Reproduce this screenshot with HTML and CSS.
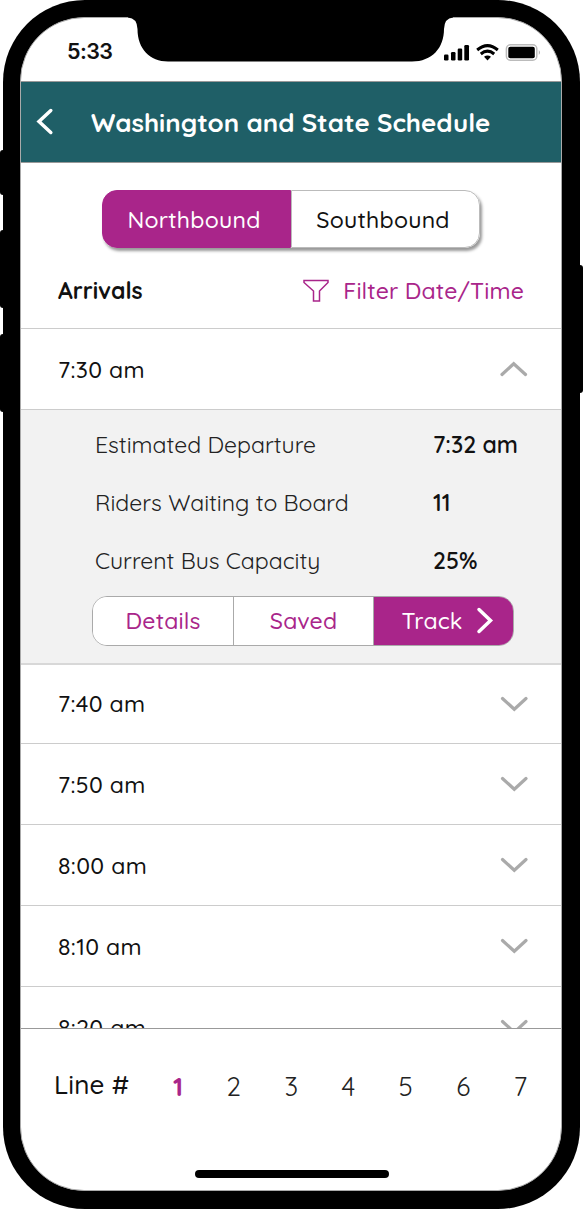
FILE: index.html
```html
<!DOCTYPE html>
<html lang="en">
<head>
<meta charset="utf-8">
<title>Washington and State Schedule</title>
<link rel="stylesheet" href="styles.css">
</head>
<body>
<svg class="symbols" aria-hidden="true">
  <symbol id="down" viewBox="0 0 28 18"><path d="M2.500 3.500 14.300 14.300 26 3.500" fill="none" stroke="#aaa" stroke-width="3.200" stroke-linecap="round"/></symbol>
</svg>
<div class="phone">
  <i class="side-key mute"></i><i class="side-key volume-up"></i><i class="side-key volume-down"></i><i class="side-key power"></i>
  <svg class="notch" viewBox="0 0 325 46"><path d="M0 0H325V1.500Q316.500 2 316 13C316 32 304 45.500 284 45.500H40C22 45.500 9.500 33 9.500 13Q9 2 0 1.500Z"/></svg>
  <main class="screen">
    <div class="status">
      <span class="clock">5:33</span>
      <svg class="signals" width="98" height="20" viewBox="0 0 98 20">
        <rect x="1" y="11.500" width="4.500" height="6" rx="1.200"/><rect x="8" y="9" width="4.500" height="8.500" rx="1.200"/><rect x="14.700" y="5.500" width="4.500" height="12" rx="1.200"/><rect x="21.300" y="2" width="4.700" height="15.500" rx="1.200"/>
        <g fill="none" stroke="#000" stroke-width="3"><path d="M34.200 7Q44.500 -1.700 54.800 7"/><path d="M37.800 11Q44.500 5.300 51.200 11"/></g>
        <path d="M41 13.700Q44.500 11.100 48 13.700L44.500 17.500Z"/>
        <rect x="63.400" y="1.800" width="30.400" height="15.400" rx="4" fill="none" stroke="#bbb" stroke-width="1.500"/><rect x="65.300" y="3.700" width="26.500" height="11.600" rx="2"/><path d="M95.800 7Q98 9.500 95.800 12Z" fill="#aaa"/>
      </svg>
    </div>
    <header class="topbar">
      <svg width="18" height="28" viewBox="0 0 18 28"><path d="M14.800 2.500 3 13.500 14.800 24.500" fill="none" stroke="#fff" stroke-width="3.500" stroke-linecap="round"/></svg>
      <h1>Washington and State Schedule</h1>
    </header>
    <nav class="direction"><button class="active">Northbound</button><button>Southbound</button></nav>
    <div class="arrivals">
      <h2>Arrivals</h2>
      <a class="filter"><svg width="26" height="24" viewBox="0 0 26 24"><path d="M1 1.600H25V3.500L16.500 12V22H10.500V12L1 3.500Z" fill="none" stroke="#a9258a" stroke-width="1.500"/></svg><span>Filter Date/Time</span></a>
    </div>
    <section class="schedule">
      <div class="row first"><span>7:30 am</span><svg class="up" width="28" height="18"><use href="#down"/></svg></div>
      <div class="panel">
        <dl>
          <dt>Estimated Departure</dt><dd>7:32 am</dd>
          <dt>Riders Waiting to Board</dt><dd>11</dd>
          <dt>Current Bus Capacity</dt><dd>25%</dd>
        </dl>
        <div class="actions"><button>Details</button><button>Saved</button><button class="active">Track <svg width="18" height="28" viewBox="0 0 18 28"><path d="M3 2.500 14.500 13.500 3 24.500" fill="none" stroke="#fff" stroke-width="3.500" stroke-linecap="round"/></svg></button></div>
      </div>
      <div class="row short"><span>7:40 am</span><svg width="28" height="18"><use href="#down"/></svg></div>
      <div class="row"><span>7:50 am</span><svg width="28" height="18"><use href="#down"/></svg></div>
      <div class="row"><span>8:00 am</span><svg width="28" height="18"><use href="#down"/></svg></div>
      <div class="row"><span>8:10 am</span><svg width="28" height="18"><use href="#down"/></svg></div>
      <div class="row"><span>8:20 am</span><svg width="28" height="18"><use href="#down"/></svg></div>
    </section>
    <footer class="lines">
      <div class="picker"><strong>Line #</strong><div class="numbers"><b>1</b><span>2</span><span>3</span><span>4</span><span>5</span><span>6</span><span>7</span></div></div>
      <div class="home"></div>
    </footer>
  </main>
</div>
</body>
</html>
```
FILE: styles.css
```css
* { box-sizing: border-box; }
body { margin: 0; background: #fff; color: #111; font: 500 23px/28px Quicksand, Lato, "Open Sans", sans-serif; }
h1, h2, dl, dd { margin: 0; }
svg { display: block; flex: none; }
button { font: inherit; letter-spacing: inherit; padding: 0; border: 0; background: #fff; color: inherit; }
.symbols { position: absolute; width: 0; height: 0; }
.phone { position: relative; width: 577px; height: 1209px; margin-left: 3px; padding: 17px 18px 18px 17px; background: #000; border-radius: 82px; }
.side-key { position: absolute; left: -3px; width: 6px; background: #000; border-radius: 3px 0 0 3px; }
.mute { top: 150px; height: 45px; }
.volume-up { top: 230px; height: 78px; }
.volume-down { top: 334px; height: 78px; }
.power { left: auto; right: -3px; top: 265px; height: 128px; border-radius: 0 3px 3px 0; }
.notch { position: absolute; z-index: 1; left: 125px; top: 16px; width: 325px; height: 46px; }
.screen { display: flex; flex-direction: column; height: 1174px; background: #fff; border: 1px solid #aaa; border-radius: 64px; overflow: hidden; }
.status { flex: 0 0 63px; display: flex; justify-content: space-between; padding: 19px 20px 0 46px; }
.clock { font: 600 21.500px/28px Inter, sans-serif; letter-spacing: -.6px; }
.signals { margin-top: 6px; }
.topbar { flex: 0 0 82px; display: flex; align-items: center; background: #1f5f67; color: #fff; padding: 0 0 1px 15px; border: 1px solid #999; border-width: 1px 0; }
h1 { margin-left: 37px; padding-top: 1px; font-size: 25.900px; font-weight: 700; white-space: nowrap; }
.direction { flex: none; display: flex; align-self: center; width: 378px; height: 58px; margin: 27px 1px 0 0; border-radius: 15px; box-shadow: 2px 3px 3px #999; letter-spacing: .250px; }
.direction button { flex: 1; padding: 1px 4px 0 0; border: 1px solid #bbb; border-radius: 0 15px 15px 0; }
.direction .active { border-color: #a9258a; border-radius: 15px 0 0 15px; }
button.active { background: #a9258a; color: #fff; }
.arrivals { flex: 0 0 80px; display: flex; justify-content: space-between; align-items: center; padding: 5px 37px 0 37px; }
h2 { font-size: 23px; font-weight: 700; }
.filter { display: flex; align-items: center; gap: 14px; color: #a9258a; letter-spacing: .150px; }
.schedule { flex: 1; min-height: 0; overflow: hidden; border-top: 1px solid #ccc; }
.row { display: flex; justify-content: space-between; align-items: center; height: 81px; padding: 0 33px 0 37px; border-bottom: 1px solid #ccc; letter-spacing: .350px; }
.row span { padding-top: 2px; }
.short { height: 79px; }
.short span { padding-top: 0; }
.up { transform: rotate(180deg); }
.panel { height: 255px; padding: 6px 47px 0 71px; background: #f2f2f2; border-bottom: 2px solid #d8d8d8; }
dl { display: grid; grid-template-columns: 338px 1fr; grid-auto-rows: 58px; align-items: center; padding-left: 3px; }
dt { font-weight: 400; color: #222; }
dd { font-weight: 600; white-space: nowrap; }
.actions { display: grid; grid-template-columns: repeat(3, 1fr); height: 50px; margin-top: 6px; border: 1px solid #aaa; border-radius: 15px; overflow: hidden; color: #a9258a; letter-spacing: .150px; }
.actions button + button { border-left: 1px solid #aaa; }
.actions .active { display: flex; align-items: center; justify-content: center; gap: 13px; padding-left: 8px; }
.lines { flex: 0 0 162px; display: flex; flex-direction: column; align-items: center; border-top: 1px solid #999; }
.picker { display: flex; align-items: center; width: 100%; height: 115px; padding: 0 34px 0 33px; font-size: 26px; }
.picker strong { width: 119px; margin-top: -3px; font-weight: 500; letter-spacing: .150px; }
.numbers { flex: 1; display: flex; justify-content: space-between; color: #222; font-weight: 400; }
.numbers b { color: #a9258a; font-weight: 700; }
.home { width: 194px; height: 8px; margin: 26px 0 0 1px; border-radius: 4px; background: #000; }
```
